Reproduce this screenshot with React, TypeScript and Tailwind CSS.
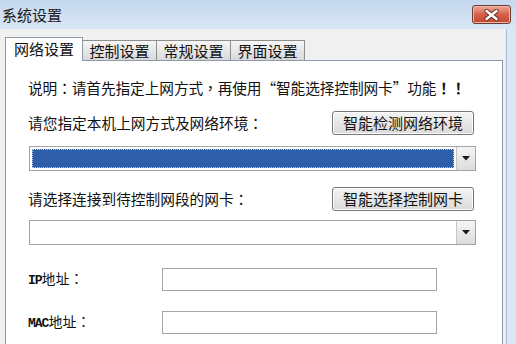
import React from 'react';

const font = { fontFamily: '"Noto Sans CJK TC", "Noto Sans CJK SC", "Noto Sans", sans-serif' };
const mono = { fontFamily: '"Liberation Mono", "DejaVu Sans Mono", monospace' };

function Tab({ label, active }: { label: string; active?: boolean }) {
  if (active) {
    return (
      <div className="relative z-10 -mb-px flex h-[24px] w-[78px] items-start justify-center border border-b-0 border-[#8d9aab] bg-white pt-[1px] text-[15px] leading-[20px] text-[#111]">
        {label}
      </div>
    );
  }
  return (
    <div className="-ml-px flex h-[20px] w-[75px] items-center justify-center border border-b-0 border-[#8e8f8f] bg-gradient-to-b from-[#f6f6f6] to-[#d9d9d9] text-[15px] leading-[18px] text-[#111]">
      {label}
    </div>
  );
}

function Combo({ selected }: { selected?: boolean }) {
  return (
    <div className="ml-[1px] flex h-[25px] w-[447px] border border-[#a3a3a3] bg-white">
      <div className="flex flex-1 p-[2px]">
        {selected && (
          <div className="flex-1 border border-dotted border-[#b9c8e2] bg-[#2f5ea8]" />
        )}
      </div>
      <div className="flex w-[19px] items-center justify-center border-l border-[#c5c5c5] bg-gradient-to-b from-[#f5f5f5] to-[#dcdcdc]">
        <svg width="8" height="5" viewBox="0 0 8 5">
          <path d="M0 0 H8 L4 4.5 Z" fill="#1a1a1a" />
        </svg>
      </div>
    </div>
  );
}

function Btn({ label }: { label: string }) {
  return (
    <div className="mr-[2px] flex h-[24px] w-[142px] items-center justify-center rounded-[3px] border border-[#777] bg-gradient-to-b from-[#f4f4f4] to-[#dadada] text-[15px] leading-[18px] text-[#111] shadow-[inset_0_0_0_1px_#fbfbfb]">
      {label}
    </div>
  );
}

export default function App() {
  return (
    <div className="h-[344px] w-[516px] overflow-hidden bg-[#dbe7f5]" style={font}>
      {/* title bar */}
      <div className="flex h-[29px] items-center justify-between bg-gradient-to-b from-[#c5d8ee] to-[#d9e6f5] pl-[2px] pr-[5px]">
        <span className="text-[15px] leading-[18px] text-[#1b1b1b]">系统设置</span>
        <div className="mt-[5px] flex h-[19px] w-[39px] items-center justify-center self-start rounded-[3px] border border-[#6a3b38] bg-gradient-to-b from-[#eaa99a] via-[#d5604a] to-[#c7452f] shadow-[inset_0_0_0_1px_#f0b7a8]">
          <svg width="15" height="12" viewBox="0 0 15 12">
            <path d="M2.5 2 L12.5 10 M12.5 2 L2.5 10" stroke="#5e241d" strokeWidth="4.2" strokeLinecap="round" />
            <path d="M2.5 2 L12.5 10 M12.5 2 L2.5 10" stroke="#ffffff" strokeWidth="2.6" strokeLinecap="round" />
          </svg>
        </div>
      </div>

      <div className="flex h-[315px]">
        {/* client area */}
        <div className="w-[506px] bg-[#f0f0f0] pl-[5px] pt-[7px]">
          <div className="flex h-[24px] items-end">
            <Tab label="网络设置" active />
            <Tab label="控制设置" />
            <Tab label="常规设置" />
            <Tab label="界面设置" />
          </div>
          <div className="h-[300px] w-[498px] border border-[#8d9aab] bg-white pl-[22px] text-[#111]">
            <div className="mt-[17px] text-[14.7px] leading-[20px] tracking-[-0.1px]">
              说明：请首先指定上网方式，再使用“智能选择控制网卡”功能<span className="font-bold">！！</span>
            </div>

            <div className="mt-[13px] flex w-[448px] items-center justify-between">
              <span className="text-[14.7px] leading-[20px]">请您指定本机上网方式及网络环境：</span>
              <Btn label="智能检测网络环境" />
            </div>

            <div className="mt-[11px]">
              <Combo selected />
            </div>

            <div className="mt-[16px] flex w-[448px] items-center justify-between">
              <span className="text-[14.7px] leading-[20px]">请选择连接到待控制网段的网卡：</span>
              <Btn label="智能选择控制网卡" />
            </div>

            <div className="mt-[9px]">
              <Combo />
            </div>

            <div className="mt-[23px] flex items-center">
              <span className="w-[134px] text-[14px] leading-[18px]">
                <span className="text-[13px] font-bold tracking-[-1px]" style={mono}>IP</span>地址：
              </span>
              <div className="h-[23px] w-[275px] border border-[#a5a5a5] bg-white" />
            </div>

            <div className="mt-[20px] flex items-center">
              <span className="w-[134px] text-[14px] leading-[18px]">
                <span className="text-[13px] font-bold tracking-[-1px]" style={mono}>MAC</span>地址：
              </span>
              <div className="h-[23px] w-[275px] border border-[#a5a5a5] bg-white" />
            </div>
          </div>
        </div>
        {/* window frame */}
        <div className="w-px bg-[#a9bdd8]" />
        <div className="flex-1 bg-[#dbe7f5]" />
      </div>
    </div>
  );
}
